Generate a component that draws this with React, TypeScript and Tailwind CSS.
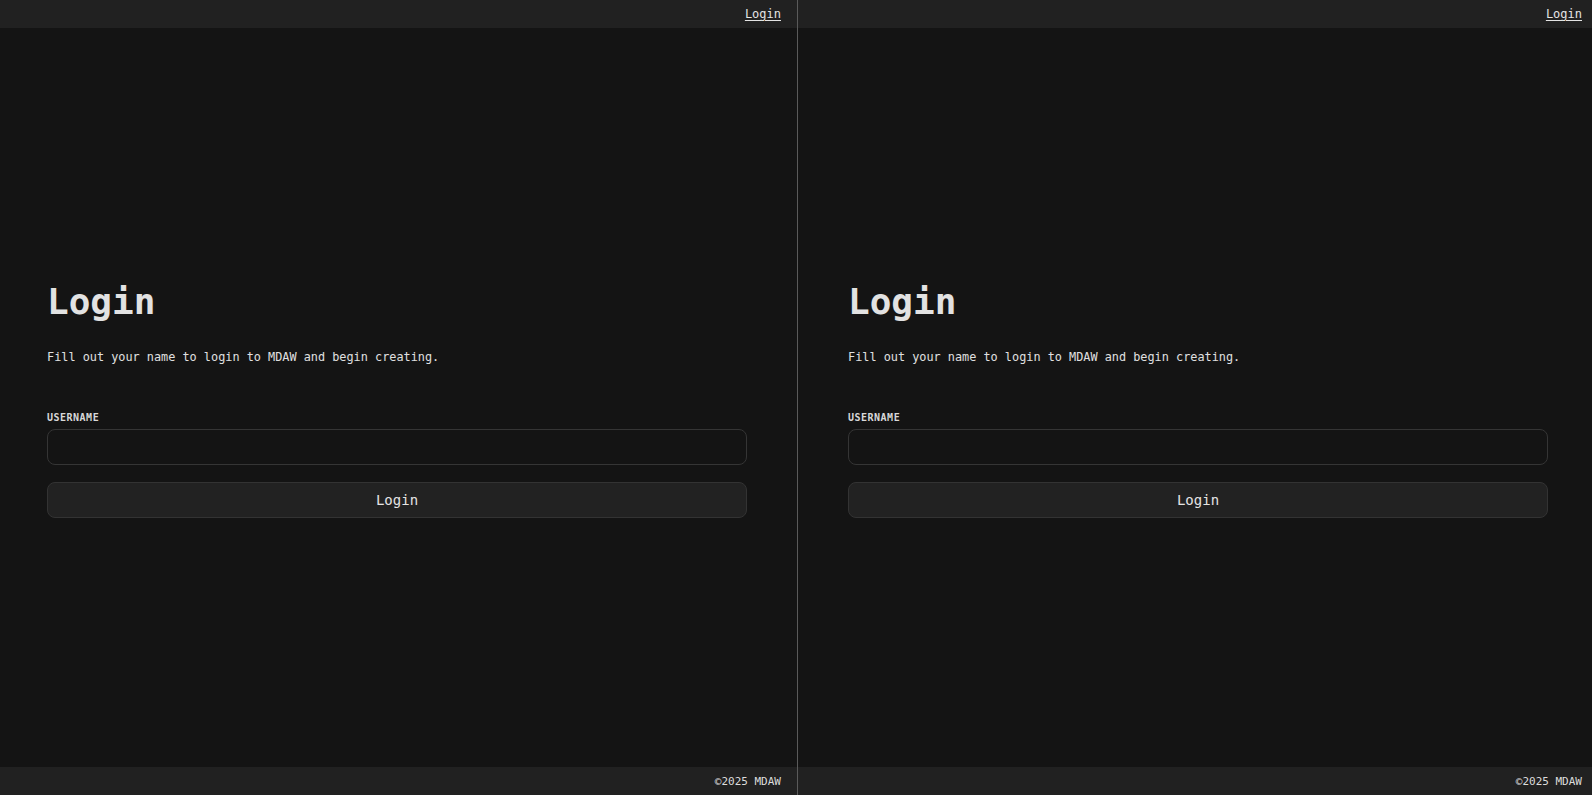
import { useState } from 'react'

const MONO = "font-['DejaVu_Sans_Mono',monospace]"

function LoginPane({ className }: { className?: string }) {
  const [username, setUsername] = useState('')

  return (
    <div className={`flex h-full flex-col bg-[#141414] ${className ?? ''}`}>
      <header className="flex h-[28px] shrink-0 items-center justify-end bg-[#212121] pl-4">
        <a href="#" className="text-[12px] leading-none text-[#e4e4e4] underline underline-offset-2">
          Login
        </a>
      </header>

      <main className="flex flex-1 flex-col justify-center">
        <div className="w-[700px] pt-[7px]">
          <h1 className="mb-7 text-[36px] font-bold leading-none text-[#e2e2e2]">Login</h1>
          <p className="text-[11.85px] leading-[18px] text-[#e0e0e0]">
            Fill out your name to login to MDAW and begin creating.
          </p>

          <form
            className="mt-[45px] flex flex-col"
            onSubmit={(e) => {
              e.preventDefault()
            }}
          >
            <label className="mb-1 text-[10px] font-bold uppercase leading-[14px] tracking-wider text-[#d8d8d8]">
              Username
            </label>
            <input
              value={username}
              onChange={(e) => setUsername(e.target.value)}
              className="h-[36px] rounded-lg border border-[#353535] bg-[#141414] px-3 text-[14px] text-[#e0e0e0] outline-none"
            />
            <button
              type="submit"
              className="mt-[17px] h-[36px] rounded-lg border border-[#333] bg-[#222] text-[14px] text-[#e4e4e4]"
            >
              Login
            </button>
          </form>
        </div>
      </main>

      <footer className="flex h-[28px] shrink-0 items-center justify-end bg-[#212121] pl-4">
        <span className="text-[11px] leading-none text-[#dcdcdc]">©2025 MDAW</span>
      </footer>
    </div>
  )
}

export default function App() {
  return (
    <div className={`flex h-[795px] w-full overflow-hidden bg-[#141414] ${MONO}`}>
      <div className="w-[797px] shrink-0">
        <LoginPane className="[&_main]:pl-[47px] [&_header]:pr-4 [&_footer]:pr-4" />
      </div>
      <div className="w-px shrink-0 bg-[#5a5a5a]" />
      <div className="flex-1">
        <LoginPane className="[&_main]:pl-[50px] [&_header]:pr-[10px] [&_footer]:pr-[10px]" />
      </div>
    </div>
  )
}
